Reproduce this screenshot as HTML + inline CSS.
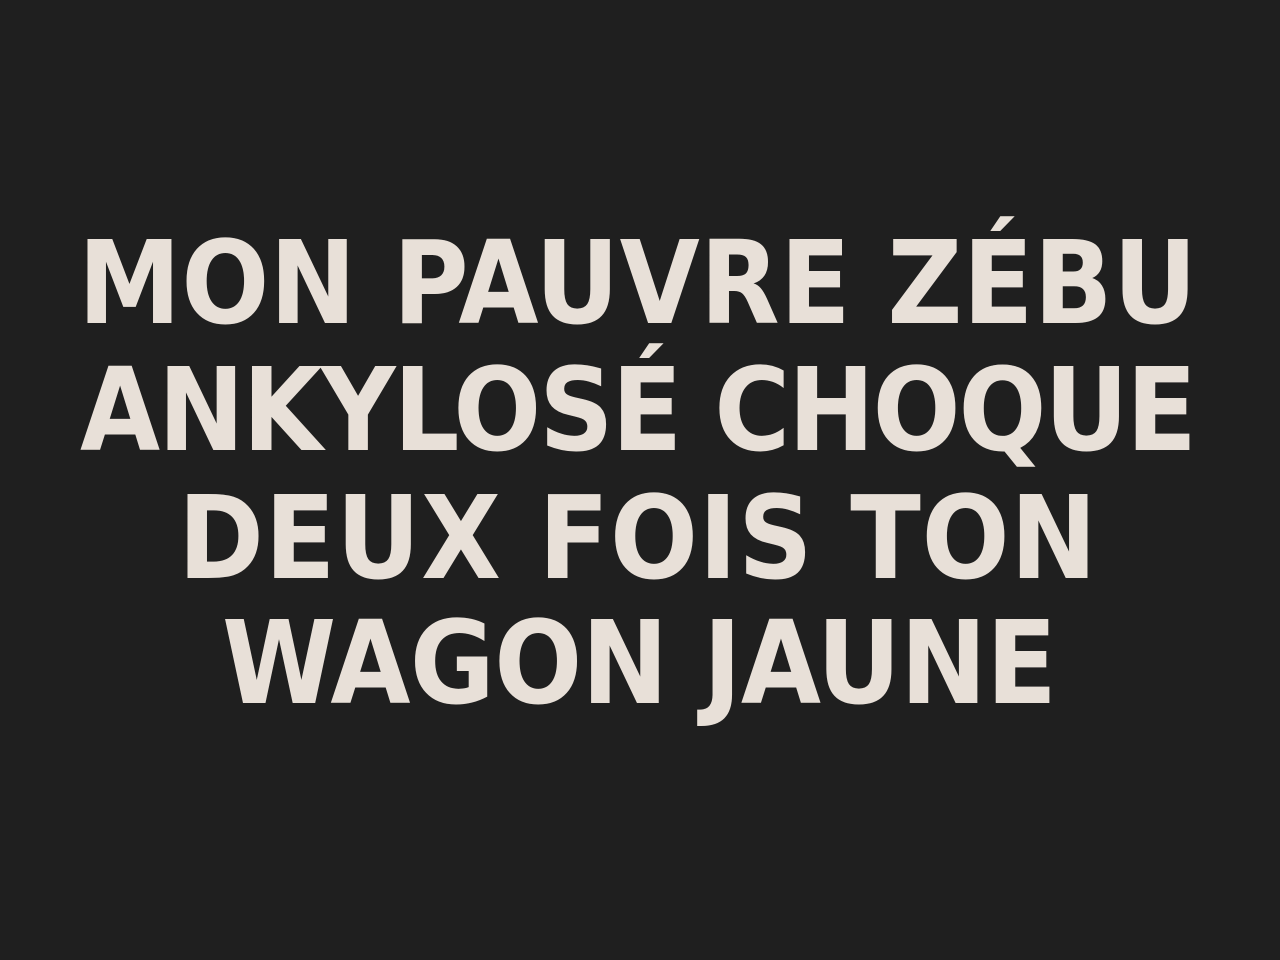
<!DOCTYPE html>
<html><head><meta charset="utf-8"><style>
html,body{margin:0;padding:0;background:#1f1f1f;width:1280px;height:960px;overflow:hidden}
svg{display:block}
text{font-family:"DejaVu Sans Condensed","DejaVu Sans","Liberation Sans",sans-serif;font-stretch:condensed;font-weight:bold;font-size:115px;fill:#e8e0d8}
</style></head><body>
<svg width="1280" height="960" viewBox="0 0 1280 960">
<text x="78" y="323" textLength="1119" lengthAdjust="spacing">MON PAUVRE ZÉBU</text>
<text x="80" y="450" textLength="1117" lengthAdjust="spacing">ANKYLOSÉ CHOQUE</text>
<text x="178" y="578" textLength="919" lengthAdjust="spacing">DEUX FOIS TON</text>
<text x="222" y="703" textLength="835" lengthAdjust="spacing">WAGON JAUNE</text>
</svg>
</body></html>
